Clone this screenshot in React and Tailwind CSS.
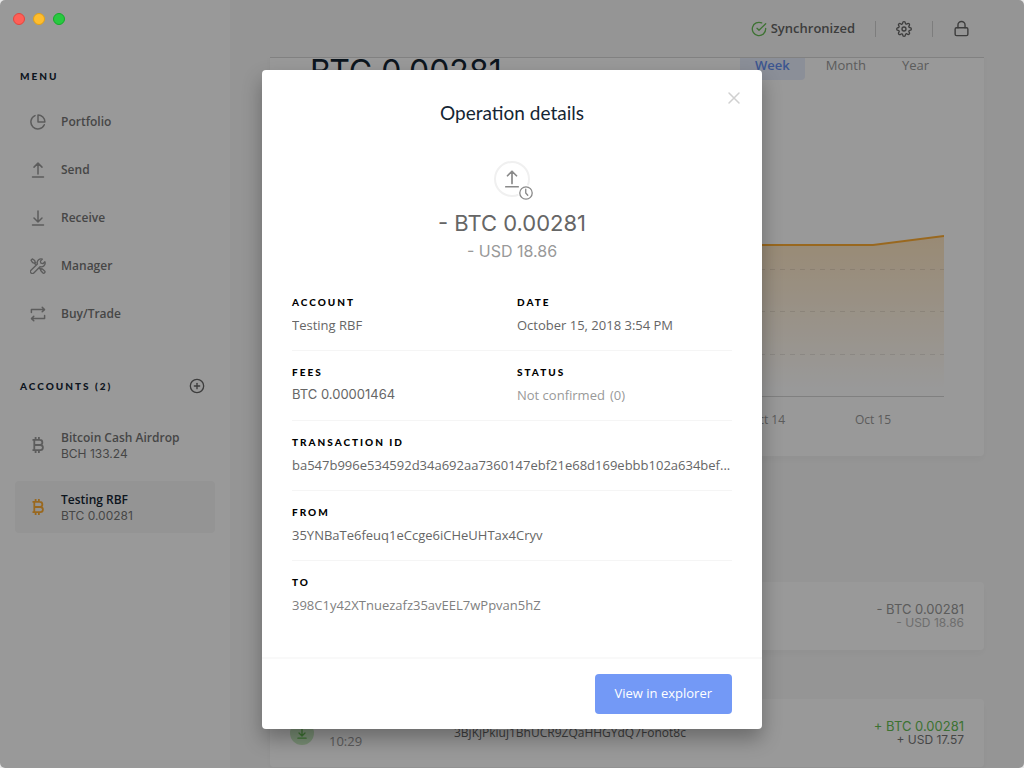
import React from "react";
import { FiCheckCircle, FiLock, FiPlusCircle, FiSettings } from "react-icons/fi";

function Icon({ children, className = "size-4", strokeWidth = 1.3 }) {
  return (
    <svg
      viewBox="0 0 16 16"
      className={className}
      fill="none"
      stroke="currentColor"
      strokeWidth={strokeWidth}
      strokeLinecap="round"
      strokeLinejoin="round"
      aria-hidden="true"
    >
      {children}
    </svg>
  );
}

const PortfolioIcon = () => (
  <Icon strokeWidth={1.5}>
    <path d="M8 1a6.9 6.9 0 0 1 6.9 6.9H8z" />
    <path d="M14.3 10.8A7 7 0 1 1 5 1.6" />
  </Icon>
);

const SendIcon = ({ strokeWidth = 1.5, ...props }) => (
  <Icon strokeWidth={strokeWidth} {...props}>
    <path d="M8 12V1.2M4 5.1l4-4 4 4M2.5 14.9h11" />
  </Icon>
);

const ReceiveIcon = ({ strokeWidth = 1.5, ...props }) => (
  <Icon strokeWidth={strokeWidth} {...props}>
    <path d="M8 1.1v10.8M4 8l4 4 4-4M2.5 14.9h11" />
  </Icon>
);

const ManagerIcon = () => (
  <Icon strokeWidth={1.3}>
    <path d="M14.9 3.7l-2 2-2-.6-.5-2 2-2a3.9 3.9 0 0 0-5 4.9L1 12.2a1.9 1.9 0 0 0 2.8 2.8L10 8.7a3.9 3.9 0 0 0 4.9-5z" />
    <path d="M5.4 6.3L4.1 5 2.6 4.6 1 2.2 2.3.9l2.4 1.6.4 1.5.9.9" />
    <path d="M9.6 10.5l1.2 1.2-.1.8 2 2.3a1.3 1.3 0 0 0 1.9-1.9l-2.2-2-.9.1-.7-.7" />
  </Icon>
);

const TradeIcon = () => (
  <Icon strokeWidth={1.5}>
    <path d="M1.4 6.6V3.6h13M12.2 1.3l2.3 2.3-2.3 2.2M14.6 9.6v3h-13M3.8 10.3l-2.3 2.3 2.3 2.2" />
  </Icon>
);

const BitcoinIcon = () => (
  <Icon strokeWidth={1.8}>
    <path
      strokeLinecap="butt"
      d="M2.5 2.9h7.3a2.5 2.5 0 0 1 0 5.1H4.3M4.3 8h6a2.6 2.6 0 0 1 0 5.2H2.5M4.3 2.9v10.3M5.6 0v2.9M8.9 0v2.9M5.6 13.2V16M8.9 13.2V16"
    />
  </Icon>
);

const menu = [
  { label: "Portfolio", icon: PortfolioIcon },
  { label: "Send", icon: SendIcon },
  { label: "Receive", icon: ReceiveIcon },
  { label: "Manager", icon: ManagerIcon },
  { label: "Buy/Trade", icon: TradeIcon },
];

const accounts = [
  { name: "Bitcoin Cash Airdrop", balance: "BCH 133.24", active: false },
  { name: "Testing RBF", balance: "BTC 0.00281", active: true },
];

function SidebarTitle({ children }) {
  return (
    <h2 className="font-[Lato,sans-serif] text-[10px] leading-4 font-black tracking-[2px] text-[#142533]">
      {children}
    </h2>
  );
}

function Sidebar() {
  return (
    <aside className="flex w-[230px] shrink-0 flex-col bg-white px-[15px] pt-[68px]">
      <div className="px-[5px]">
        <SidebarTitle>MENU</SidebarTitle>
      </div>
      <nav className="mt-[18px] flex flex-col gap-2">
        {menu.map(({ label, icon: Glyph }) => (
          <a key={label} href="#" className="flex h-10 items-center gap-[15px] px-[15px] text-[#999]">
            <Glyph />
            <span className="text-[12px] font-semibold text-[#767676]">{label}</span>
          </a>
        ))}
      </nav>
      <div className="mt-11 flex h-4 items-center justify-between pr-[10px] pl-[5px]">
        <SidebarTitle>ACCOUNTS (2)</SidebarTitle>
        <button type="button" aria-label="Add account" className="text-[#666]">
          <FiPlusCircle className="size-4" />
        </button>
      </div>
      <div className="mt-[25px] flex flex-col gap-[10px]">
        {accounts.map((a) => (
          <a
            key={a.name}
            href="#"
            className={
              a.active
                ? "flex h-[52px] items-center gap-[15px] rounded bg-[#f7f7f7] px-[15px] text-[#ffae35]"
                : "flex h-[52px] items-center gap-[15px] rounded px-[15px] text-[#999]"
            }
          >
            <BitcoinIcon />
            <span className="flex flex-col pt-[2px] leading-4">
              <span
                className={
                  a.active
                    ? "text-[12px] font-semibold text-[#142533]"
                    : "text-[12px] font-semibold text-[#767676]"
                }
              >
                {a.name}
              </span>
              <span className="font-[Inter,sans-serif] text-[12px] text-[#767676]">{a.balance}</span>
            </span>
          </a>
        ))}
      </div>
    </aside>
  );
}

function TopBar() {
  return (
    <header className="mx-10 flex h-[58px] shrink-0 items-center justify-end border-b border-[#d8d8d8] pr-[14px] text-[#666]">
      <span className="flex items-center gap-1 text-[13px] font-semibold">
        <FiCheckCircle className="size-4 text-[#66be54]" />
        Synchronized
      </span>
      <span className="mx-5 h-4 w-px bg-[#d0d0d0]" />
      <button type="button" aria-label="Settings">
        <FiSettings className="size-4" />
      </button>
      <span className="mx-5 h-4 w-px bg-[#d0d0d0]" />
      <button type="button" aria-label="Lock">
        <FiLock className="size-[17px]" />
      </button>
    </header>
  );
}

function Chart() {
  return (
    <div className="mt-[150px]">
      <svg viewBox="0 0 634 170" preserveAspectRatio="none" className="h-[170px] w-full" aria-hidden="true">
        <defs>
          <linearGradient id="area" x1="0" y1="0" x2="0" y2="1">
            <stop offset="0" stopColor="#ffae35" stopOpacity="0.3" />
            <stop offset="0.95" stopColor="#ffae35" stopOpacity="0" />
          </linearGradient>
        </defs>
        <path d="M0 15H563L634 6V166H0z" fill="url(#area)" />
        <g stroke="#000" strokeOpacity="0.09" strokeDasharray="5 5">
          <path d="M0 39.5H634M0 81.5H634M0 124.5H634" />
        </g>
        <path d="M0 166.5H634" stroke="#d6d6d6" />
        <path d="M0 15H563L634 6" fill="none" stroke="#ffae35" strokeWidth="2" />
      </svg>
      <div className="mt-[10px] mr-[18px] -ml-5 grid grid-cols-6 text-center text-[12px] leading-5 text-[#999]">
        {["Oct 10", "Oct 11", "Oct 12", "Oct 13", "Oct 14", "Oct 15"].map((d) => (
          <span key={d}>{d}</span>
        ))}
      </div>
    </div>
  );
}

function Balance() {
  return (
    <section className="-mt-3 h-[410px] shrink-0 rounded bg-white px-10 shadow-[0_4px_8px_rgba(0,0,0,0.03)]">
      <div className="flex h-[34px] items-start justify-between">
        <p className="pt-1 font-[Inter,sans-serif] text-[32px] leading-[44px] text-[#142533]">BTC 0.00281</p>
        <div className="flex text-[13px] text-[#999]">
          <button type="button" className="h-[34px] rounded bg-[#e8eefe] px-[15px] pt-[6px] font-semibold text-[#6490f1]">
            Week
          </button>
          <button type="button" className="ml-1 h-[34px] px-[17px] pt-[6px]">
            Month
          </button>
          <button type="button" className="ml-1 h-[34px] px-[15px] pt-[6px]">
            Year
          </button>
        </div>
      </div>
      <Chart />
    </section>
  );
}

function Operations() {
  return (
    <>
      <section className="mt-[126px] flex h-[68px] shrink-0 items-center justify-end rounded bg-white px-5 shadow-[0_4px_8px_rgba(0,0,0,0.03)]">
        <p className="flex flex-col text-right font-[Inter,sans-serif] leading-[14px]">
          <span className="text-[13px] text-[#999]">- BTC 0.00281</span>
          <span className="text-[12px] text-[#b8b8b8]">- USD 18.86</span>
        </p>
      </section>
      <section className="mt-[49px] flex h-[68px] shrink-0 items-center rounded bg-white px-5 shadow-[0_4px_8px_rgba(0,0,0,0.03)]">
        <span className="flex size-6 items-center justify-center rounded-full bg-[#c9ecc1] text-[#66be54]">
          <ReceiveIcon className="size-3" strokeWidth={1.7} />
        </span>
        <time className="ml-[15px] w-[125px] pt-4 text-[13px] leading-5 text-[#999]">10:29</time>
        <span className="text-[12px] leading-5 text-[#666]">3BjKjPkiuj1BhUCR9ZQaHHGYdQ7Fonot8c</span>
        <p className="ml-auto flex flex-col text-right font-[Inter,sans-serif] leading-[14px]">
          <span className="text-[13px] text-[#66be54]">+ BTC 0.00281</span>
          <span className="text-[12px] text-[#767676]">+ USD 17.57</span>
        </p>
      </section>
    </>
  );
}

function Field({ label, children }) {
  return (
    <div className="min-w-0 flex-1">
      <dt className="font-[Lato,sans-serif] text-[10px] leading-3 font-black tracking-[2px] text-black">{label}</dt>
      <dd className="mt-2 truncate text-[13px] leading-[18px] text-[#666]">{children}</dd>
    </div>
  );
}

function FieldRow({ children, last = false }) {
  return (
    <div
      className={
        last ? "flex gap-[10px] pt-[15px] pb-[43px]" : "flex h-[70px] gap-[10px] border-b border-[#f5f5f5] pt-[15px]"
      }
    >
      {children}
    </div>
  );
}

function OperationDialog() {
  return (
    <div className="absolute inset-0 flex items-start justify-center bg-black/40 pt-[70px]">
      <div
        role="dialog"
        aria-modal="true"
        aria-labelledby="dialog-title"
        className="relative w-full max-w-[500px] rounded bg-white shadow-[0_10px_20px_rgba(0,0,0,0.3)]"
      >
        <button type="button" aria-label="Close" className="absolute top-5 right-5 text-[#d0d0d0]">
          <Icon strokeWidth={1.5}>
            <path d="M3 3l10 10M13 3L3 13" />
          </Icon>
        </button>
        <div className="flex flex-col items-center pt-[30px]">
          <h1 id="dialog-title" className="font-[Lato,sans-serif] text-[19px] leading-[26px] text-[#142533]">
            Operation details
          </h1>
          <div className="relative mt-[35px] flex size-9 items-center justify-center rounded-full border-2 border-[#f0f0f0] text-[#8a8a8a]">
            <SendIcon className="size-[18px]" />
            <span className="absolute -right-[6px] -bottom-[6px] rounded-full bg-white p-px">
              <Icon className="size-[14px]" strokeWidth={1.5}>
                <circle cx="8" cy="8" r="7.1" />
                <path d="M7.7 3.6V8l2.3 2.5" />
              </Icon>
            </span>
          </div>
          <p className="mt-[11px] font-[Inter,sans-serif] text-[22px] leading-[30px] text-[#666]">- BTC 0.00281</p>
          <p className="mt-[3px] font-[Inter,sans-serif] text-[16px] leading-5 text-[#999]">- USD 18.86</p>
        </div>
        <dl className="mt-5 px-[30px]">
          <FieldRow>
            <Field label="ACCOUNT">Testing RBF</Field>
            <Field label="DATE">October 15, 2018 3:54 PM</Field>
          </FieldRow>
          <FieldRow>
            <Field label="FEES">
              <span className="block font-[Inter,sans-serif] leading-4">BTC 0.00001464</span>
            </Field>
            <Field label="STATUS">
              <span className="flex gap-[5px] text-[#999]">
                <span>Not confirmed</span>
                <span>(0)</span>
              </span>
            </Field>
          </FieldRow>
          <FieldRow>
            <Field label="TRANSACTION ID">ba547b996e534592d34a692aa7360147ebf21e68d169ebbb102a634bef...</Field>
          </FieldRow>
          <FieldRow>
            <Field label="FROM">35YNBaTe6feuq1eCcge6iCHeUHTax4Cryv</Field>
          </FieldRow>
          <FieldRow last>
            <Field label="TO">
              <span className="text-[#808080]">398C1y42XTnuezafz35avEEL7wPpvan5hZ</span>
            </Field>
          </FieldRow>
        </dl>
        <div className="flex justify-end border-t-2 border-[#f9f9f9] px-[30px] py-[15px]">
          <button type="button" className="h-10 rounded bg-[#7399f6] px-5 text-[13px] font-normal text-white">
            View in explorer
          </button>
        </div>
      </div>
    </div>
  );
}

function WindowControls() {
  return (
    <div className="absolute top-[13px] left-[13px] flex gap-2">
      <button type="button" aria-label="Close window" className="size-3 rounded-full border border-[#e2463f] bg-[#ff5f57]" />
      <button type="button" aria-label="Minimise window" className="size-3 rounded-full border border-[#e1a116] bg-[#ffbd2e]" />
      <button type="button" aria-label="Zoom window" className="size-3 rounded-full border border-[#12ac28] bg-[#28c940]" />
    </div>
  );
}

export default function App() {
  return (
    <div className="h-screen bg-[#e8e8e8]">
      <div className="relative flex h-full overflow-hidden rounded-[5px] bg-[#f9f9f9] font-['Open_Sans',sans-serif]">
        <Sidebar />
        <main className="flex min-w-0 flex-1 flex-col">
          <TopBar />
          <div className="flex min-h-0 flex-1 flex-col overflow-hidden px-10">
            <Balance />
            <Operations />
          </div>
        </main>
        <OperationDialog />
        <WindowControls />
      </div>
    </div>
  );
}
